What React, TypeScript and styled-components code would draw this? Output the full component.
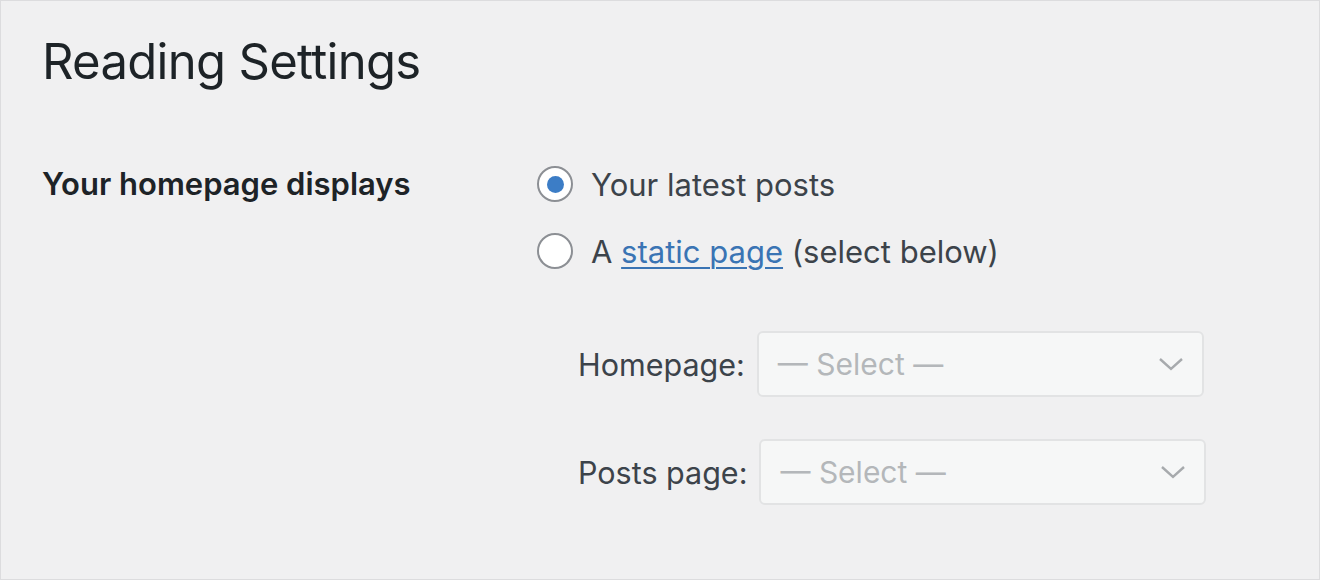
import React from "react";
import styled, { createGlobalStyle } from "styled-components";

const Global = createGlobalStyle`
  html, body { margin: 0; padding: 0; background: #ffffff; }
  body { font-family: Inter, "Noto Sans", "Liberation Sans", sans-serif; }
  * { box-sizing: border-box; }
`;

const Frame = styled.div`
  width: 1320px;
  height: 580px;
  border: 1px solid #dcdcde;
  background: #f0f0f1;
  padding: 0 0 0 41px;
  color: #1d2327;
`;

const Title = styled.h1`
  margin: 0;
  padding-top: 32px;
  font-size: 49px;
  font-weight: 400;
  line-height: 58px;
  letter-spacing: -0.7px;
  color: #1d2327;
`;

const SettingRow = styled.div`
  display: flex;
  margin-top: 75px;
`;

const Th = styled.div`
  width: 495px;
  flex: none;
  font-size: 31px;
  font-weight: 600;
  line-height: 36px;
  color: #1d2327;
`;

const Td = styled.div`
  display: flex;
  flex-direction: column;
`;

const RadioRow = styled.label`
  display: flex;
  align-items: center;
  gap: 18px;
  height: 36px;
  margin-bottom: 31px;
  font-size: 31px;
  color: #3c434a;
`;

const RadioCircle = styled.span<{ $checked?: boolean }>`
  width: 36px;
  height: 36px;
  flex: none;
  border-radius: 50%;
  border: 2.5px solid #8c8f94;
  background: #ffffff;
  display: flex;
  align-items: center;
  justify-content: center;
  &::after {
    content: "";
    display: ${(p) => (p.$checked ? "block" : "none")};
    width: 17px;
    height: 17px;
    border-radius: 50%;
    background: #3c7dc6;
  }
`;

const Link = styled.a`
  color: #3a74b4;
  text-decoration: underline;
  text-underline-offset: 4px;
  text-decoration-thickness: 2px;
`;

const SelectList = styled.div`
  display: flex;
  flex-direction: column;
  gap: 42px;
  padding-left: 41px;
  margin-top: 31px;
`;

const SelectRow = styled.div`
  display: flex;
  align-items: center;
  gap: 12px;
`;

const SelectLabel = styled.span`
  font-size: 30.5px;
  color: #3c434a;
`;

const SelectBox = styled.div`
  width: 447px;
  height: 66px;
  border: 2px solid #e2e3e4;
  border-radius: 6px;
  background: #f6f7f7;
  display: flex;
  align-items: center;
  justify-content: space-between;
  padding: 0 18px 0 19px;
  font-size: 30px;
  color: #b4b7ba;
`;

const Chevron = () => (
  <svg width="26" height="16" viewBox="0 0 26 16" fill="none">
    <path d="M2 3 L13 13 L24 3" stroke="#a7aaad" strokeWidth="2.4" />
  </svg>
);

export default function App() {
  return (
    <>
      <Global />
      <Frame>
        <Title>Reading Settings</Title>
        <SettingRow>
          <Th>Your homepage displays</Th>
          <Td>
            <RadioRow>
              <RadioCircle $checked />
              <span>Your latest posts</span>
            </RadioRow>
            <RadioRow>
              <RadioCircle />
              <span>
                A <Link href="#">static page</Link> (select below)
              </span>
            </RadioRow>
            <SelectList>
              <SelectRow>
                <SelectLabel>Homepage:</SelectLabel>
                <SelectBox>
                  <span>— Select —</span>
                  <Chevron />
                </SelectBox>
              </SelectRow>
              <SelectRow>
                <SelectLabel>Posts page:</SelectLabel>
                <SelectBox>
                  <span>— Select —</span>
                  <Chevron />
                </SelectBox>
              </SelectRow>
            </SelectList>
          </Td>
        </SettingRow>
      </Frame>
    </>
  );
}
